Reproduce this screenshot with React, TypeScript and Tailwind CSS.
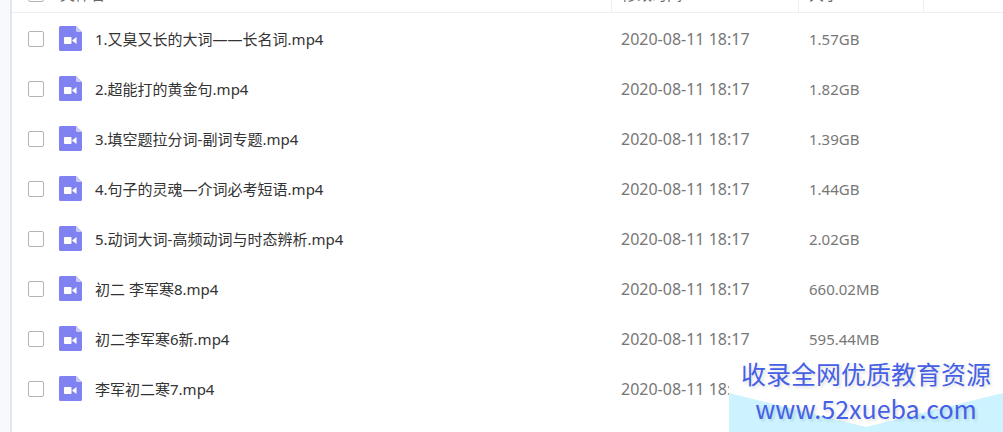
import {useState} from "react"

type FileEntry = {
    name: string
    modified: string
    size: string
}

const FILES: FileEntry[] = [
    {name: "1.又臭又长的大词——长名词.mp4", modified: "2020-08-11 18:17", size: "1.57GB"},
    {name: "2.超能打的黄金句.mp4", modified: "2020-08-11 18:17", size: "1.82GB"},
    {name: "3.填空题拉分词-副词专题.mp4", modified: "2020-08-11 18:17", size: "1.39GB"},
    {name: "4.句子的灵魂—介词必考短语.mp4", modified: "2020-08-11 18:17", size: "1.44GB"},
    {name: "5.动词大词-高频动词与时态辨析.mp4", modified: "2020-08-11 18:17", size: "2.02GB"},
    {name: "初二 李军寒8.mp4", modified: "2020-08-11 18:17", size: "660.02MB"},
    {name: "初二李军寒6新.mp4", modified: "2020-08-11 18:17", size: "595.44MB"},
    {name: "李军初二寒7.mp4", modified: "2020-08-11 18:17", size: ""},
]

const checkboxClass =
    "block size-4 shrink-0 appearance-none rounded-[2px] border border-[#b4b4b4] bg-white checked:border-[#8080f0] checked:bg-[#8080f0]"

function VideoFileIcon() {
    return (
        <svg className="h-[26px] w-[23px] shrink-0" viewBox="0 0 23 26" aria-hidden="true">
            <path d="M1.500 0H17l6 6v17.500a1.500 1.500 0 0 1-1.500 1.500h-20A1.500 1.500 0 0 1 0 23.500v-22A1.500 1.500 0 0 1 1.500 0z" fill="#8182f1"/>
            <path d="M17 0l6 6h-4.500a1.500 1.500 0 0 1-1.500-1.500z" fill="#c9c9fa"/>
            <rect x="5" y="11" width="7.500" height="7" rx="0.800" fill="#fff"/>
            <path d="M13 14.500l4.500-3.500v7z" fill="#fff"/>
        </svg>
    )
}

function Watermark() {
    return (
        <div className="absolute right-0 bottom-0 isolate bg-white px-3 pb-1.5 text-center text-[25px] leading-[35px] text-[#4560e6] font-['Noto_Sans_CJK_SC',sans-serif] text-shadow-[2px_2px_3px_#0000001f]">
            <svg
                className="absolute bottom-0 left-0 -z-10 h-10 w-full"
                viewBox="0 0 274 40"
                preserveAspectRatio="none"
                aria-hidden="true"
            >
                <path d="M0 1l137 34L274 1v39H0z" fill="#ccf3ff"/>
            </svg>
            <p>收录全网优质教育资源</p>
            <p>www.52xueba.com</p>
        </div>
    )
}

export default function App() {
    const [selected, setSelected] = useState<string[]>([])

    const toggle = (name: string) =>
        setSelected((prev) => (prev.includes(name) ? prev.filter((n) => n !== name) : [...prev, name]))

    const allSelected = selected.length === FILES.length

    return (
        <div className="relative flex min-h-screen overflow-hidden bg-white text-[15px] leading-5 font-['Noto_Sans','Noto_Sans_CJK_SC',sans-serif]">
            <div className="w-3 shrink-0 border-r-2 border-[#e3e6ed] bg-[#f7f9fc]"/>

            <main className="min-w-0 flex-1">
                {/* the header row is scrolled half out of view */}
                <table className="-mt-6 w-full table-fixed border-separate border-spacing-0 text-left">
                    <colgroup>
                        <col/>
                        <col className="w-[187px]"/>
                        <col className="w-[125px]"/>
                        <col className="w-20"/>
                    </colgroup>
                    <thead>
                        <tr className="h-[37px] text-[#666]">
                            <th className="border-b border-[#eeeff3] p-0 pl-4 font-normal">
                                <div className="flex items-center gap-4">
                                    <input
                                        type="checkbox"
                                        aria-label="全选"
                                        className={checkboxClass}
                                        checked={allSelected}
                                        onChange={() => setSelected(allSelected ? [] : FILES.map((f) => f.name))}
                                    />
                                    文件名
                                </div>
                            </th>
                            <th className="border-b border-l border-[#eeeff3] p-0 pl-[10px] font-normal">修改时间</th>
                            <th className="border-b border-l border-[#eeeff3] p-0 pl-[10px] font-normal">大小</th>
                            <td className="border-b border-l border-[#eeeff3] p-0"/>
                        </tr>
                    </thead>
                    <tbody>
                        {FILES.map((file, i) => (
                            <tr key={file.name} className="h-[50px] text-[#777]">
                                <td className="p-0 pt-0.5 pl-4">
                                    <div className="flex items-center">
                                        <input
                                            id={`file-${i}`}
                                            type="checkbox"
                                            className={checkboxClass}
                                            checked={selected.includes(file.name)}
                                            onChange={() => toggle(file.name)}
                                        />
                                        <label
                                            htmlFor={`file-${i}`}
                                            className="ml-[15px] flex items-center gap-[13px] text-[#333]"
                                        >
                                            <VideoFileIcon/>
                                            {file.name}
                                        </label>
                                    </div>
                                </td>
                                <td className="p-0 pt-0.5 pl-[10px] text-base leading-5">{file.modified}</td>
                                <td className="p-0 pt-0.5 pl-[11px]">{file.size}</td>
                                <td className="p-0"/>
                            </tr>
                        ))}
                    </tbody>
                </table>
            </main>

            <Watermark/>
        </div>
    )
}
